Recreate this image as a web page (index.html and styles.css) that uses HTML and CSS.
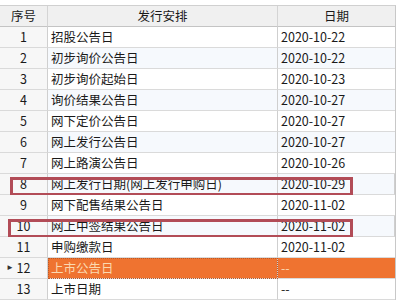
FILE: index.html
```html
<!DOCTYPE html>
<html lang="zh-CN">
<head>
<meta charset="utf-8">
<link rel="stylesheet" href="styles.css">
</head>
<body>
<div class="sheet">
  <div class="grid">
    <div class="row head">
      <div class="c no">序号</div><div class="c name center">发行安排</div><div class="c date center">日期</div>
    </div>
    <div class="row"><div class="c no">1</div><div class="c name">招股公告日</div><div class="c date">2020-10-22</div></div>
    <div class="row alt"><div class="c no">2</div><div class="c name">初步询价公告日</div><div class="c date">2020-10-22</div></div>
    <div class="row"><div class="c no">3</div><div class="c name">初步询价起始日</div><div class="c date">2020-10-23</div></div>
    <div class="row alt"><div class="c no">4</div><div class="c name">询价结果公告日</div><div class="c date">2020-10-27</div></div>
    <div class="row"><div class="c no">5</div><div class="c name">网下定价公告日</div><div class="c date">2020-10-27</div></div>
    <div class="row alt"><div class="c no">6</div><div class="c name">网上发行公告日</div><div class="c date">2020-10-27</div></div>
    <div class="row"><div class="c no">7</div><div class="c name">网上路演公告日</div><div class="c date">2020-10-26</div></div>
    <div class="row alt"><div class="c no">8</div><div class="c name">网上发行日期(网上发行申购日)</div><div class="c date">2020-10-29</div><span class="mark mark-a"></span></div>
    <div class="row"><div class="c no">9</div><div class="c name">网下配售结果公告日</div><div class="c date">2020-11-02</div></div>
    <div class="row alt"><div class="c no">10</div><div class="c name">网上中签结果公告日</div><div class="c date">2020-11-02</div><span class="mark mark-b"></span></div>
    <div class="row"><div class="c no">11</div><div class="c name">申购缴款日</div><div class="c date">2020-11-02</div></div>
    <div class="row sel"><div class="c no"><span class="caret">&#9658;</span>12</div><div class="c name">上市公告日</div><div class="c date">--</div></div>
    <div class="row"><div class="c no">13</div><div class="c name">上市日期</div><div class="c date">--</div></div>
  </div>
</div>
</body>
</html>
```
FILE: styles.css
```css
html, body {
  margin: 0;
  padding: 0;
  background: #ffffff;
}
.sheet {
  width: 400px;
  height: 303px;
  padding-top: 5px;
  box-sizing: border-box;
  font-family: "Noto Sans CJK SC", "Noto Sans", sans-serif;
  font-size: 12.5px;
  color: #1a1a1a;
}
.grid {
  width: 396px;
  border-top: 1px solid #d0d0d0;
  border-right: 1px solid #c8c8c8;
  box-sizing: border-box;
}
.row {
  position: relative;
  display: grid;
  grid-template-columns: 48px 230px 1fr;
  height: 21px;
}
.c {
  border-right: 1px solid #cfcfcf;
  border-bottom: 1px solid #dadada;
  box-sizing: border-box;
  display: flex;
  align-items: center;
  padding: 0 3px;
  line-height: 1;
  white-space: nowrap;
  background: #ffffff;
}
.c:last-child {
  border-right: none;
}
.no {
  justify-content: center;
  background: #f7f7f7;
  position: relative;
}
.center {
  justify-content: center;
}
.head .c {
  background: #f0f0f0;
  border-bottom: 1px solid #c4c4c4;
  border-right-color: #d4d4d4;
}
.alt .name, .alt .date {
  background: #f6f9fd;
}
.sel .name, .sel .date {
  background: #ef7330;
  color: #fbd9b0;
}
.sel .name {
  outline: 1px dotted #b95a2a;
  outline-offset: -1px;
}
.caret {
  position: absolute;
  left: 6px;
  top: 5px;
  font-size: 8px;
  color: #333;
}
.mark {
  position: absolute;
  border: 3px solid #b24c57;
  box-sizing: border-box;
  pointer-events: none;
}
.mark-a {
  left: 10px;
  width: 343px;
  top: 3px;
  height: 19px;
}
.mark-b {
  left: 8px;
  width: 345px;
  top: 3px;
  height: 19px;
}
```
